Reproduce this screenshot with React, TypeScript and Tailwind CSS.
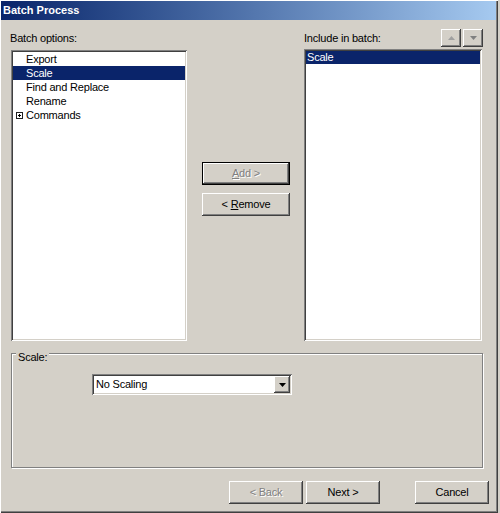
import React from "react";

const raised =
  "bg-[#d4d0c8] shadow-[inset_-1px_-1px_#404040,inset_1px_1px_#ffffff,inset_-2px_-2px_#808080,inset_2px_2px_#d4d0c8]";
const sunken =
  "shadow-[inset_1px_1px_#808080,inset_-1px_-1px_#ffffff,inset_2px_2px_#404040,inset_-2px_-2px_#d4d0c8]";

function Btn({
  label,
  disabled,
  isDefault,
  className = "",
}: {
  label: React.ReactNode;
  disabled?: boolean;
  isDefault?: boolean;
  className?: string;
}) {
  const face = (
    <div
      className={`${raised} flex h-full w-full items-center justify-center leading-[13px] ${
        disabled ? "text-[#808080] [text-shadow:1px_1px_#ffffff]" : "text-black"
      }`}
    >
      {label}
    </div>
  );
  if (isDefault) {
    return <div className={`border border-black ${className}`}>{face}</div>;
  }
  return <div className={className}>{face}</div>;
}

function Tri({ down, color }: { down?: boolean; color: string }) {
  return (
    <svg width="7" height="4" viewBox="0 0 7 4">
      {down ? (
        <polygon points="0,0 7,0 3.5,4" fill={color} />
      ) : (
        <polygon points="0,4 7,4 3.5,0" fill={color} />
      )}
    </svg>
  );
}

const options = ["Export", "Scale", "Find and Replace", "Rename"];

export default function App() {
  return (
    <div className="h-[513px] w-[500px] bg-[#d4d0c8] font-['Liberation_Sans',Arial,sans-serif] text-[11px] tracking-[-0.2px] text-black">
      <div className="flex h-[513px] w-[498px] flex-col pb-[2px] pl-[1px] pr-[2px] pt-[1px] shadow-[inset_1px_1px_#ffffff,inset_-1px_-1px_#404040,inset_-2px_-2px_#808080]">
        {/* Title bar */}
        <div className="flex h-[19px] items-center bg-gradient-to-r from-[#0a246a] to-[#a6caf0] pl-[2px] text-[11px] font-bold tracking-normal text-white">
          Batch Process
        </div>

        {/* Lists */}
        <div className="flex pl-[10px]">
          <div className="w-[176px]">
            <div className="ml-[-1px] mt-[12px] h-[13px] leading-[13px]">Batch options:</div>
            <div className={`mt-[5px] h-[291px] bg-white p-[2px] ${sunken}`}>
              {options.map((o) => (
                <div
                  key={o}
                  className={`h-[14px] pl-[13px] leading-[14px] ${
                    o === "Scale" ? "bg-[#0a246a] text-white" : ""
                  }`}
                >
                  {o}
                </div>
              ))}
              <div className="flex h-[14px] items-center leading-[14px]">
                <svg width="7" height="7" viewBox="0 0 7 7" className="ml-[3px] mr-[3px]">
                  <rect x="0.5" y="0.5" width="6" height="6" fill="#fff" stroke="#202020" />
                  <line x1="2" y1="3.5" x2="5" y2="3.5" stroke="#000" />
                  <line x1="3.5" y1="2" x2="3.5" y2="5" stroke="#000" />
                </svg>
                <span>Commands</span>
              </div>
            </div>
          </div>

          <div className="ml-[15px] w-[88px]">
            <Btn
              label={
                <span>
                  <span className="underline">A</span>dd &gt;
                </span>
              }
              disabled
              isDefault
              className="mt-[142px] h-[23px]"
            />
            <Btn
              label={
                <span>
                  &lt; <span className="underline">R</span>emove
                </span>
              }
              className="mt-[8px] h-[23px]"
            />
          </div>

          <div className="ml-[14px] w-[178px]">
            <div className="mt-[9px] flex h-[18px] items-end">
              <div className="mb-[2px] h-[13px] flex-1 leading-[13px]">Include in batch:</div>
              <div className={`${raised} mr-[2px] flex h-[18px] w-[20px] items-center justify-center`}>
                <Tri color="#a0a0a0" />
              </div>
              <div className={`${raised} -mr-[1px] flex h-[18px] w-[20px] items-center justify-center`}>
                <Tri down color="#808080" />
              </div>
            </div>
            <div className={`mt-[2px] h-[292px] bg-white p-[2px] ${sunken}`}>
              <div className="h-[13px] bg-[#0a246a] pl-[1px] leading-[13px] text-white">Scale</div>
            </div>
          </div>
        </div>

        {/* Scale group */}
        <div className="relative ml-[10px] mt-[12px] h-[115px] w-[472px] border border-[#808080] shadow-[inset_1px_1px_#ffffff,1px_1px_#ffffff]">
          <span className="absolute left-[4px] top-[-3px] bg-[#d4d0c8] px-[2px] leading-[13px]">Scale:</span>
          <div className={`ml-[80px] mt-[20px] flex h-[21px] w-[200px] bg-white p-[2px] ${sunken}`}>
            <div className="flex-1 pl-[2px] leading-[17px]">No Scaling</div>
            <div className={`${raised} flex h-[17px] w-[16px] items-center justify-center`}>
              <Tri down color="#000" />
            </div>
          </div>
        </div>

        {/* Bottom buttons */}
        <div className="ml-[228px] mt-[13px] flex">
          <Btn label="< Back" disabled className="h-[23px] w-[74px]" />
          <Btn label="Next >" className="ml-[3px] h-[23px] w-[74px]" />
          <Btn label="Cancel" className="ml-[35px] h-[23px] w-[74px]" />
        </div>
      </div>
    </div>
  );
}
